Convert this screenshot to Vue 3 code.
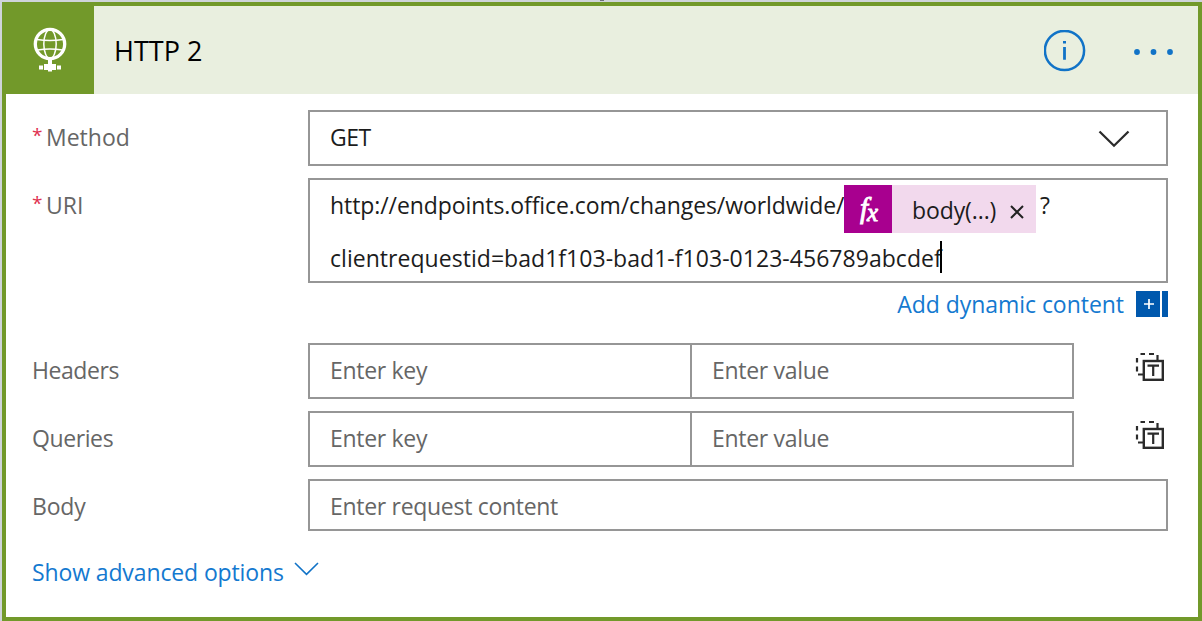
<script setup>
const pairs = [
  { label: 'Headers', cls: 'w-headers' },
  { label: 'Queries', cls: 'w-queries' },
]
</script>

<template>
  <div class="page">
    <span class="arrow-tip"></span>
    <div class="card">
      <header class="head">
        <div class="logo">
          <svg width="34" height="48" viewBox="0 0 34 48">
            <g fill="none" stroke="#fff">
              <circle cx="17" cy="20" r="14.7" stroke-width="3.300" />
              <ellipse cx="17" cy="20" rx="6.2" ry="14.5" stroke-width="1.5" />
              <path d="M4 15.500Q17 17.500 30 15.500M4.500 26Q17 24 29.500 26" stroke-width="1.500" />
            </g>
            <path d="M15 35h4v5h-4zM11 40h12v6H11zM6 41.500h4v4H6zM24 41.500h4v4h-4zM15 46h4v1.500h-4z" fill="#fff" />
          </svg>
        </div>
        <h1 class="title"><span class="w-title">HTTP 2</span></h1>
        <svg class="info" width="42" height="42" viewBox="0 0 42 42">
          <circle cx="20.500" cy="20.500" r="19.600" fill="none" stroke="#1173c7" stroke-width="2.500" />
          <path d="M19 11h3v2.600h-3zM19.100 17h2.800V29.700h-2.800z" fill="#1173c7" />
        </svg>
        <svg class="more" width="42" height="8" viewBox="0 0 42 8">
          <g fill="#1173c7"><circle cx="4" cy="4" r="2.900" /><circle cx="20.500" cy="4" r="2.900" /><circle cx="37" cy="4" r="2.900" /></g>
        </svg>
      </header>

      <main class="form">
        <div class="row">
          <label class="label"><i class="req">*</i><span class="w-method">Method</span></label>
          <div class="box select">
            <span class="w-get">GET</span>
            <svg width="32" height="18" viewBox="0 0 32 18"><path d="M1.500 1.500L16 15.700L30.500 1.500" fill="none" stroke="#2b2b2b" stroke-width="2.300" /></svg>
          </div>
        </div>

        <div class="row uri-row">
          <label class="label"><i class="req">*</i><span class="w-uri">URI</span></label>
          <div class="box uri">
            <div class="line first">
              <span class="url w-url">http://endpoints.office.com/changes/worldwide/</span>
              <span class="token">
                <span class="fx">f<span class="x">x</span></span>
                <span class="expr w-expr">body(...)</span>
                <svg width="14" height="14" viewBox="0 0 14 14"><path d="M1 1L13 13M13 1L1 13" stroke="#222" stroke-width="2" /></svg>
              </span>
              <span class="mark">?</span>
            </div>
            <div class="line second">
              <span class="w-client">clientrequestid=bad1f103-bad1-f103-0123-456789abcdef</span><b class="caret"></b>
            </div>
          </div>
        </div>

        <div class="dynamic">
          <a class="w-dynamic">Add dynamic content</a>
          <svg width="32" height="26" viewBox="0 0 32 26">
            <path d="M0 0h24v26H0zM26 0h6v26h-6z" fill="#0058ad" />
            <path d="M8 13h10M13 8v10" stroke="#fff" stroke-width="1.700" />
          </svg>
        </div>

        <div v-for="p in pairs" :key="p.label" class="row">
          <label class="label"><span :class="p.cls">{{ p.label }}</span></label>
          <div class="pair">
            <div class="cell"><span class="w-key">Enter key</span></div>
            <div class="cell"><span class="w-value">Enter value</span></div>
          </div>
          <svg class="mode" width="30" height="30" viewBox="0 0 30 30" fill="none" stroke="#2b2b2b">
            <path d="M5.500 2h4.500M14 2h5M22.500 3v5M2 6v4.500M2 14.500v5M3 22.500h5" stroke-width="2.200" />
            <rect x="8.800" y="9" width="19" height="18.800" stroke-width="2.400" />
            <path d="M12.500 13.600h11.500M18.200 13.600v10.400" stroke-width="2.200" />
          </svg>
        </div>

        <div class="row">
          <label class="label body-label"><span class="w-body">Body</span></label>
          <div class="box body"><span class="w-content">Enter request content</span></div>
        </div>

        <div class="advanced">
          <a class="w-adv">Show advanced options</a>
          <svg width="25" height="14" viewBox="0 0 25 14"><path d="M1 1L12.500 12.300L24 1" fill="none" stroke="#1173c7" stroke-width="1.600" /></svg>
        </div>
      </main>
    </div>
  </div>
</template>

<style>
body { background: #cfd4da; }
</style>

<style scoped>
* { box-sizing: border-box; }
.page {
  position: relative;
  width: 1202px;
  height: 621px;
  padding: 2px 0 0 2px;
  overflow: hidden;
  background: #cfd4da;
  font: 23px/32px "Open Sans", "Noto Sans", sans-serif;
  color: #1c1c1c;
  white-space: nowrap;
}
.arrow-tip { position: absolute; left: 600px; top: 0; width: 4px; height: 1px; background: #6b6f78; }
.card { width: 1200px; height: 619px; border: 4px solid #72992a; background: #fff; }
.head { display: flex; align-items: center; height: 88px; background: #e9efdf; }
.logo { width: 92px; height: 92px; margin: -4px 0 0 -4px; padding: 22px 0 0 31px; background: #72992a; }
.logo svg, .info, .more { display: block; }
.title { margin: 2px auto 0 20px; font-size: 27px; font-weight: 400; line-height: 36px; color: #000; }
.info { margin-right: 47px; margin-top: 1px; }
.more { margin-right: 23px; margin-top: 3px; }
.form { padding: 16px 30px 0 26px; }
.row { display: flex; align-items: flex-start; margin-bottom: 12px; }
.label { display: flex; width: 276px; height: 56px; padding-top: 11px; color: #666; }
.req { width: 14px; font-size: 19px; line-height: 28px; font-style: normal; color: #e0304f; }
.box { display: flex; width: 860px; height: 56px; border: 2px solid #969696; padding: 0 20px; align-items: center; }
.select { justify-content: space-between; padding-right: 36px; padding-bottom: 2px; }
.select svg { margin-top: 4px; }
.uri-row { margin-bottom: 8px; }
.uri { height: 105px; display: block; padding-top: 5px; }
.line { display: flex; }
.first { height: 48px; }
.url { width: 514px; padding-top: 4px; }
.token { display: flex; align-items: center; width: 192px; height: 48px; background: #f2d9ed; }
.fx { width: 48px; height: 48px; background: #a8008f; color: #fff; font: italic 400 29px/46px "Liberation Serif", serif; padding-left: 16px; -webkit-text-stroke: 0.9px #fff; }
.x { position: relative; top: 3px; left: -1px; font-size: 25px; }
.expr { width: 98px; margin-left: 20px; padding-top: 1px; }
.token svg { margin-top: 6px; }
.mark { margin-left: 4px; padding-top: 4px; }
.second { padding-top: 9px; }
.caret { width: 2px; height: 32px; margin: -1px 0 0 -2px; background: #000; }
.dynamic { display: flex; justify-content: flex-end; height: 26px; margin-bottom: 26px; line-height: 27px; color: #1479d0; }
.dynamic svg { margin-left: 12px; }
.pair { display: grid; grid-template-columns: 382px 384px; }
.cell { height: 56px; border: 2px solid #969696; padding: 9px 20px; color: #666; }
.cell:first-child { border-right: 0; }
.mode { margin: 9px 0 0 61px; }
.body { height: 52px; color: #666; padding-top: 2px; }
.body-label { height: 52px; }
.advanced { display: flex; margin-top: 25px; color: #1479d0; }
.advanced svg { margin: 6px 0 0 10px; }
.w-url { letter-spacing: -0.08px; }
.w-client { letter-spacing: 0.04px; }
.w-dynamic { letter-spacing: -0.04px; }
.w-headers { letter-spacing: -0.43px; }
.w-queries { letter-spacing: -0.4px; }
.w-key { letter-spacing: -0.3px; }
.w-value { letter-spacing: -0.3px; }
.w-content { letter-spacing: -0.3px; }
.w-adv { letter-spacing: -0.12px; }
.w-get { letter-spacing: -0.5px; }
.w-body { letter-spacing: -0.2px; }
.w-expr { letter-spacing: -0.1px; }
</style>
